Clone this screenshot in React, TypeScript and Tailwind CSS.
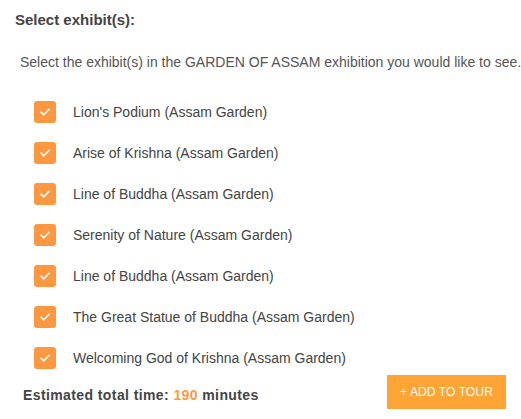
import React from "react";

const items = [
  "Lion's Podium (Assam Garden)",
  "Arise of Krishna (Assam Garden)",
  "Line of Buddha (Assam Garden)",
  "Serenity of Nature (Assam Garden)",
  "Line of Buddha (Assam Garden)",
  "The Great Statue of Buddha (Assam Garden)",
  "Welcoming God of Krishna (Assam Garden)",
];

export default function App() {
  return (
    <div className="w-[521px] h-[419px] bg-white text-[#444] overflow-hidden" style={{ fontFamily: '"Liberation Sans", Arial, sans-serif' }}>
      <div className="pl-[15px] pt-[11px] text-[15px] font-bold text-[#444] leading-[18px]">Select exhibit(s):</div>
      <div className="pl-[20px] pt-[25px] text-[14px] text-[#555] leading-[16px] whitespace-nowrap">
        Select the exhibit(s) in the GARDEN OF ASSAM exhibition you would like to see.
      </div>
      <div className="flex flex-col gap-[19px] pt-[31px] pl-[34px]">
        {items.map((t, i) => (
          <div key={i} className="flex items-center h-[22px]">
            <div className="w-[22px] h-[22px] rounded-[3px] bg-[#fd9841] flex items-center justify-center">
              <svg width="12" height="10" viewBox="0 0 12 10" fill="none">
                <path d="M2 5.2 L4.8 7.8 L10 2.4" stroke="white" strokeWidth="1.6" strokeLinecap="round" strokeLinejoin="round" />
              </svg>
            </div>
            <span className="ml-[17px] text-[14px] text-[#444]">{t}</span>
          </div>
        ))}
      </div>
      <div className="flex items-center justify-between pl-[23px] pr-[15px] pt-[6px]">
        <div className="text-[14px] font-bold text-[#444] tracking-[0.4px] pt-[6px]">
          Estimated total time: <span className="text-[#fd9841]">190</span> minutes
        </div>
        <button className="w-[119px] h-[34px] bg-[#ffa535] text-white text-[12.2px] flex items-center justify-center">
          + ADD TO TOUR
        </button>
      </div>
    </div>
  );
}
